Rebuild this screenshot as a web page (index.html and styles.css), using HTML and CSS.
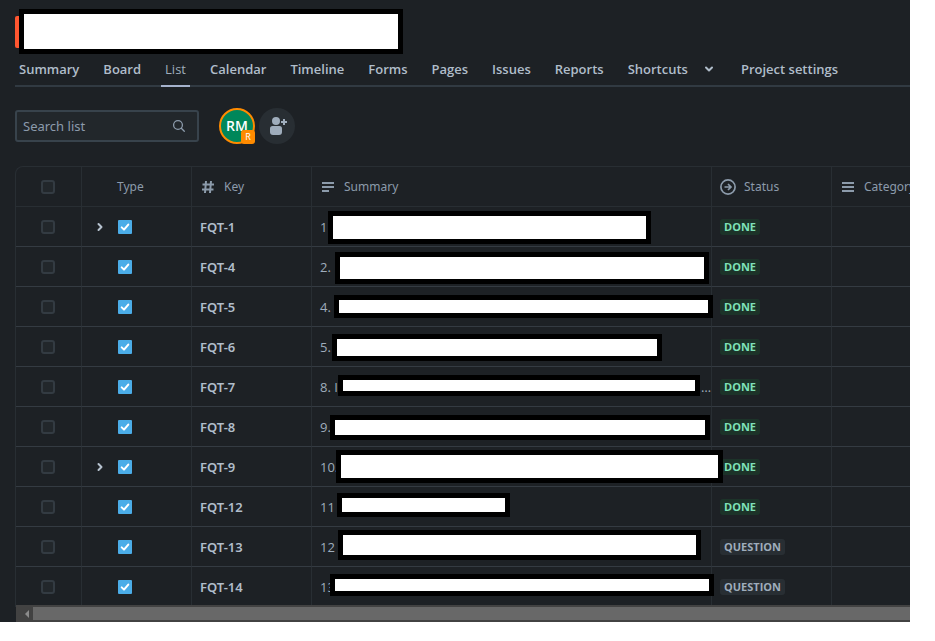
FILE: index.html
```html
<!DOCTYPE html>
<html lang="en">
<head>
<meta charset="utf-8">
<title>List</title>
<link rel="stylesheet" href="styles.css">
</head>
<body>
<svg class="symbols">
  <symbol id="task" viewBox="0 0 14 14"><rect width="14" height="14" rx="1" fill="#4bade8"/><path d="M3.7 7.4 6 9.6 10.3 4.6" fill="none" stroke="#fff" stroke-width="2" stroke-linecap="round" stroke-linejoin="round"/></symbol>
  <symbol id="chevron" viewBox="0 0 16 16"><path d="M6.5 5 9.5 8 6.5 11" fill="none" stroke="currentColor" stroke-width="2" stroke-linecap="round" stroke-linejoin="round"/></symbol>
</svg>
<main class="panel">
  <header class="project"><div class="project-icon"></div><div class="mask project-mask"></div></header>
  <nav class="tabs">
    <a class="tab" href="#">Summary</a>
    <a class="tab" href="#">Board</a>
    <a class="tab active" href="#">List</a>
    <a class="tab" href="#">Calendar</a>
    <a class="tab" href="#">Timeline</a>
    <a class="tab" href="#">Forms</a>
    <a class="tab" href="#">Pages</a>
    <a class="tab" href="#">Issues</a>
    <a class="tab" href="#">Reports</a>
    <button class="tab shortcuts" type="button">Shortcuts<svg class="icon down"><use href="#chevron"/></svg></button>
    <a class="tab" href="#">Project settings</a>
  </nav>
  <div class="toolbar">
    <label class="search"><input type="text" placeholder="Search list" aria-label="Search list"><svg class="icon" viewBox="0 0 16 16" fill="none" stroke="currentColor" stroke-width="1.3" stroke-linecap="round"><circle cx="7" cy="7" r="4.400"/><path d="m10.300 10.300 3 3"/></svg></label>
    <button class="avatar" type="button">RM<span class="badge">R</span></button>
    <button class="avatar add" type="button" aria-label="Add people"><svg viewBox="0 0 36 36" fill="currentColor"><circle cx="17" cy="13" r="4"/><path d="M11 20.500a2.500 2.500 0 0 1 2.500-2.500h7a2.500 2.500 0 0 1 2.500 2.500v3.500a3 3 0 0 1-3 3h-6a3 3 0 0 1-3-3z"/><path d="M25 11v6M22 14h6" stroke="currentColor" stroke-width="2"/></svg></button>
  </div>
  <section class="list">
    <div class="viewport">
    <table>
      <colgroup><col class="c-check"><col class="c-type"><col class="c-key"><col class="c-summary"><col class="c-status"><col class="c-category"></colgroup>
      <thead><tr>
        <th><input type="checkbox" aria-label="Select all"></th>
        <th class="type-head">Type</th>
        <th><span class="head"><svg class="icon" viewBox="0 0 16 16" fill="none" stroke="currentColor" stroke-width="2"><path d="M6 2 5 14M11 2 10 14M2.500 5.500h11.500M2 10.500h11.500"/></svg>Key</span></th>
        <th><span class="head"><svg class="icon" viewBox="0 0 16 16" fill="none" stroke="currentColor" stroke-width="2"><path d="M2 4h12M2 8h12M2 12h7"/></svg>Summary</span></th>
        <th><span class="head"><svg class="icon" viewBox="0 0 16 16" fill="none" stroke="currentColor" stroke-width="1.700"><circle cx="8" cy="8" r="7.100"/><path d="M4.500 8h6M8 5l3 3-3 3"/></svg>Status</span></th>
        <th><span class="head"><svg class="icon" viewBox="0 0 16 16" fill="none" stroke="currentColor" stroke-width="2"><path d="M2 4h12M2 8h12M2 12h12"/></svg>Category</span></th>
      </tr></thead>
      <tbody id="rows"></tbody>
    </table>
    </div>
    <div class="scrollbar"><button type="button" aria-label="Scroll left"></button><div class="thumb"></div></div>
  </section>
</main>
<script src="rows.js"></script>
</body>
</html>
```
FILE: styles.css
```css
* { box-sizing: border-box; }
body {
  margin: 0 25px 0 0;
  background: #fff;
  font-family: "Noto Sans", sans-serif;
  font-size: 13px;
  line-height: 20px;
}
button, input { font: inherit; margin: 0; }
.symbols { display: none; }
.panel {
  padding: 9px 0 0 15px;
  background: #1d2125;
  color: #9fadbc;
  overflow: hidden;
}
.icon { width: 16px; height: 16px; flex: none; display: block; }
.mask { background: #fff; border: 5px solid #000; }

.project { display: flex; align-items: center; height: 45px; }
.project-icon { width: 4px; height: 32px; background: #ff5630; border-radius: 2px 0 0 2px; }
.project-mask { width: 384px; height: 45px; }

.tabs {
  display: flex;
  gap: 16px;
  height: 33px;
  box-shadow: inset 0 -2px #313a42;
}
.tab {
  flex: none;
  padding: 5px 4px 8px;
  border: 0;
  background: none;
  color: #b0bdca;
  font-family: "Open Sans", sans-serif;
  font-weight: 600;
  text-decoration: none;
  white-space: nowrap;
}
.active { color: #9fadbc; font-weight: 500; border-bottom: 2px solid #a5b2cc; }
.shortcuts { display: flex; align-items: center; gap: 13px; }
.down { transform: rotate(90deg); }

.toolbar { display: flex; align-items: center; padding: 21px 0 22px; }
.search {
  display: flex;
  align-items: center;
  width: 184px;
  height: 32px;
  margin-right: 20px;
  padding: 0 10px 0 6px;
  border: 2px solid #38434c;
  border-radius: 3px;
  background: #22272b;
  color: #8c9bab;
}
.search input {
  flex: 1;
  min-width: 0;
  padding: 0;
  border: 0;
  outline: 0;
  background: none;
  color: #b6c2cf;
}
.search input::placeholder { color: #8c9bab; opacity: 1; }
.avatar {
  position: relative;
  width: 36px;
  height: 36px;
  margin-right: 4px;
  padding: 0;
  border: 2px solid #ff8b00;
  border-radius: 50%;
  background: #00875a;
  color: #fff;
  font-family: "Open Sans", sans-serif;
  font-size: 14px;
  font-weight: 600;
}
.badge {
  position: absolute;
  right: -2px;
  bottom: -2px;
  width: 14px;
  height: 14px;
  border-radius: 3px;
  background: #ff8b00;
  font-size: 9px;
  font-weight: 400;
  line-height: 14px;
}
.add { border: 0; background: #282e33; color: #9fadbc; }
.add svg { display: block; }

.viewport {
  overflow: hidden;
  border: solid #282e33;
  border-width: 1px 0 0 1px;
  border-top-left-radius: 8px;
}
table { table-layout: fixed; width: 1000px; border-spacing: 0; }
.c-check { width: 66px; }
.c-type { width: 110px; }
.c-key, .c-status { width: 120px; }
.c-summary { width: 400px; }
th, td {
  position: relative;
  height: 40px;
  padding: 0 8px;
  border: solid #282e33;
  border-width: 0 1px 1px 0;
  text-align: left;
  white-space: nowrap;
}
td { border-bottom-color: #343b42; font-family: "Open Sans", sans-serif; }
th { color: #8c9bab; font-weight: 400; font-size: 12px; }
.type-head { padding-left: 35px; }
.head { display: flex; align-items: center; gap: 8px; }
input[type="checkbox"] {
  appearance: none;
  display: block;
  width: 14px;
  height: 14px;
  margin-left: 17px;
  border: 2px solid #333b42;
  border-radius: 3px;
  background: #22272b;
}
.type { display: flex; align-items: center; justify-content: flex-end; gap: 10px; width: 42px; }
.type button { padding: 0; border: 0; background: none; color: #b6c2cf; }
.task { width: 14px; height: 14px; display: block; }
.key {
  color: #b0bdca;
  font-family: "Noto Sans", sans-serif;
  font-weight: 600;
  text-decoration: none;
}
.more { position: absolute; right: 0; }
.cover { position: absolute; z-index: 1; }
.lozenge {
  display: block;
  width: max-content;
  padding: 0 4px;
  border-radius: 3px;
  background: #1c3329;
  color: #7ee2b8;
  font-size: 11px;
  font-weight: 700;
  line-height: 16px;
}
.question { background: #282e33; color: #9fadbc; }

.scrollbar {
  position: relative;
  z-index: 2;
  display: flex;
  height: 17px;
  margin: -2px 0 0 1px;
  padding: 2px 0;
  background: #424242;
}
.scrollbar button {
  display: flex;
  align-items: center;
  justify-content: center;
  width: 17px;
  padding: 0;
  border: 0;
  background: none;
}
.scrollbar button::before {
  content: "";
  width: 4px;
  border: solid transparent;
  border-width: 4px 4px 4px 0;
  border-right-color: #8b8b8b;
}
.thumb { flex: 1; background: #686868; }
```
FILE: rows.js
```js
// key, summary text, status, cover box [left, top, width, height] in the summary cell, has children
const rows = [
  ["FQT-1", "1", "DONE", [16, 4, 323, 33], true],
  ["FQT-4", "2.", "DONE", [23, 5, 374, 32]],
  ["FQT-5", "4.", "DONE", [22, 8, 379, 23]],
  ["FQT-6", "5.", "DONE", [20, 7, 330, 27]],
  ["FQT-7", "8. I", "DONE", [26, 8, 362, 21]],
  ["FQT-8", "9.", "DONE", [18, 8, 380, 25]],
  ["FQT-9", "10.", "DONE", [24, 3, 387, 33], true],
  ["FQT-12", "11", "DONE", [25, 6, 173, 24]],
  ["FQT-13", "12", "QUESTION", [26, 3, 363, 30]],
  ["FQT-14", "13", "QUESTION", [18, 7, 384, 22]]
];
document.getElementById("rows").innerHTML = rows.map(([key, text, status, [x, y, w, h], parent]) => `
<tr>
  <td><input type="checkbox" aria-label="Select ${key}"></td>
  <td><div class="type">${parent ? '<button type="button" aria-label="Expand"><svg class="icon"><use href="#chevron"/></svg></button>' : ""}<svg class="task"><use href="#task"/></svg></div></td>
  <td><a class="key" href="#">${key}</a></td>
  <td>${text}${key === "FQT-7" ? '<span class="more">…</span>' : ""}<div class="mask cover" style="left:${x}px;top:${y}px;width:${w}px;height:${h}px"></div></td>
  <td><span class="lozenge ${status.toLowerCase()}">${status}</span></td>
  <td></td>
</tr>`).join("");
```
